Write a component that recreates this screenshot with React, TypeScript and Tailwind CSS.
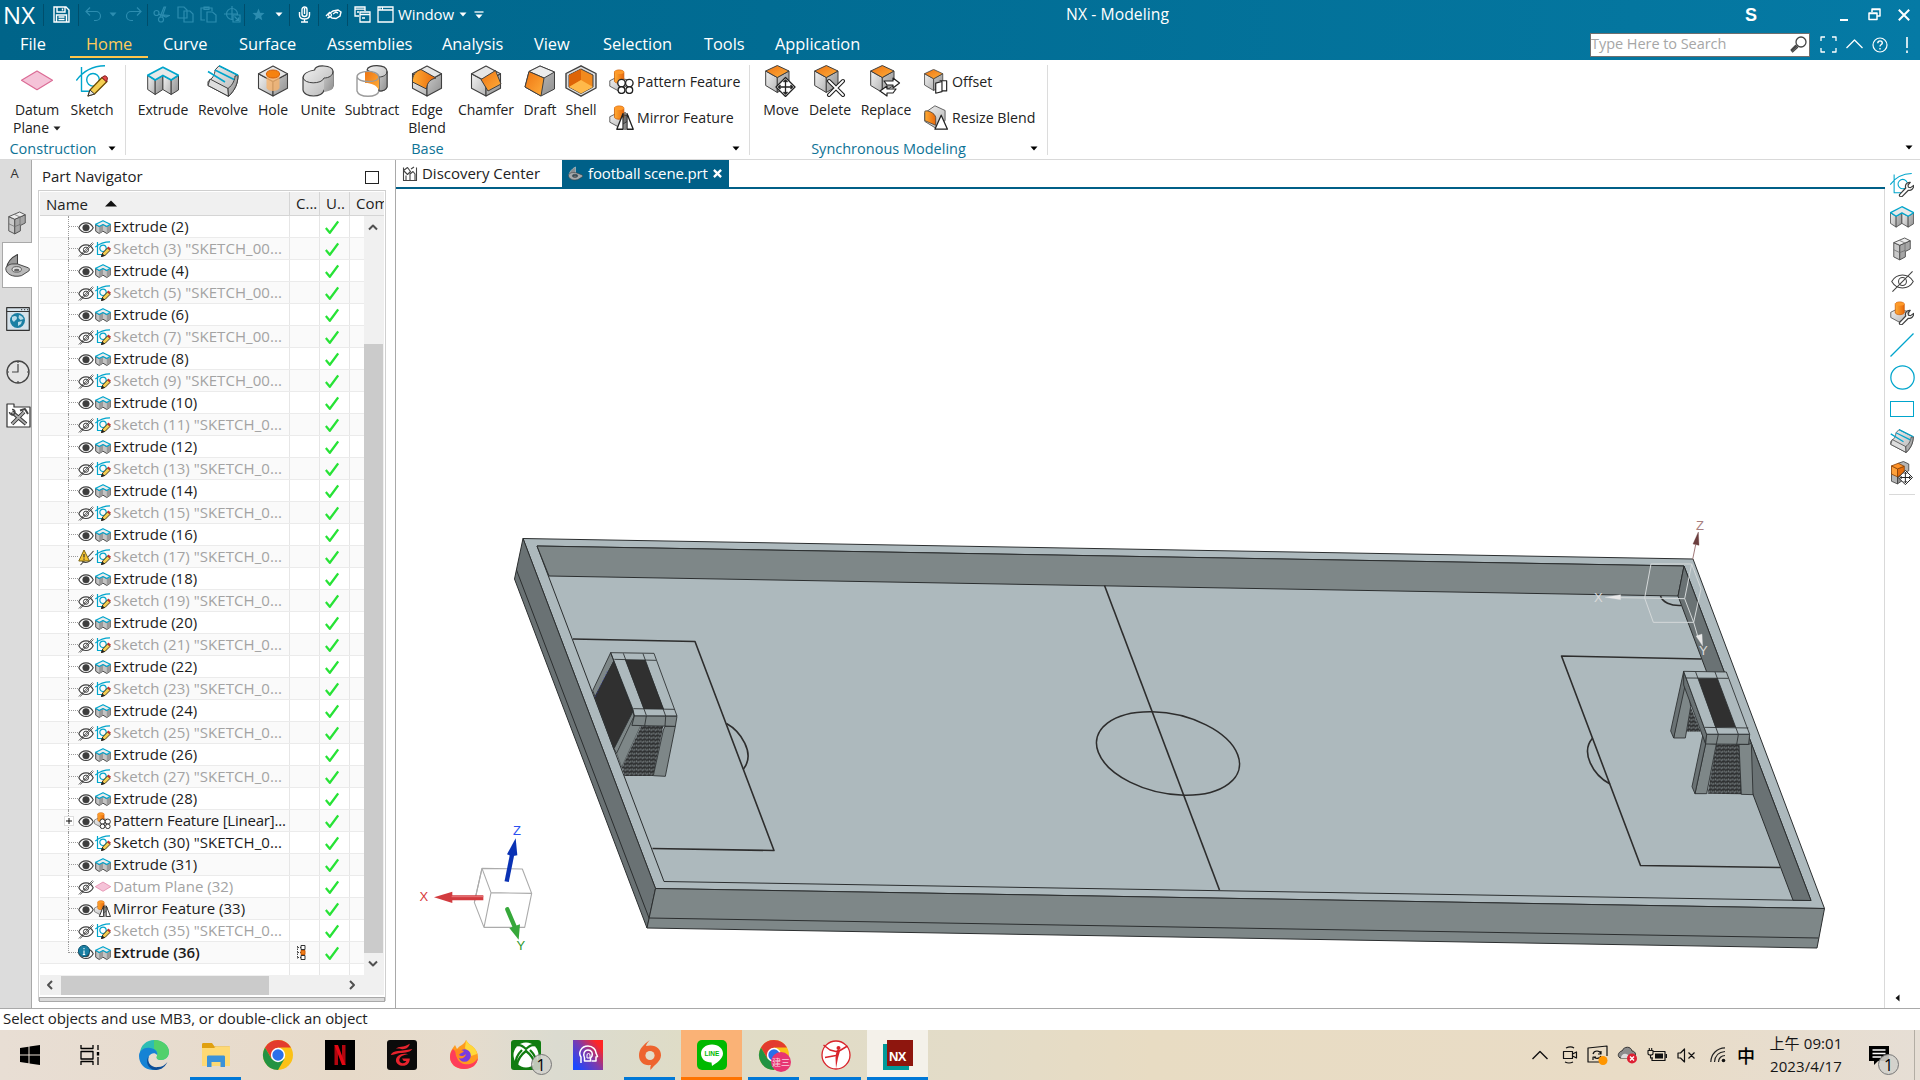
import React from "react";

const INK = "#3f3f3f";
const CY = "#00a5cc";

type P = { s?: number; className?: string };

function Ico({ s = 32, className = "", children, vb = "0 0 32 32" }: P & { children: React.ReactNode; vb?: string }) {
  return (
    <svg width={s} height={s} viewBox={vb} className={"shrink-0 " + className} fill="none" strokeLinejoin="round">
      {children}
    </svg>
  );
}

function Defs() {
  return (
    <svg width="0" height="0" className="absolute">
      <defs>
        <linearGradient id="gr" x1="0" y1="0" x2="1" y2="1">
          <stop offset="0" stopColor="#f2f2f2" />
          <stop offset="1" stopColor="#b4b4b4" />
        </linearGradient>
        <linearGradient id="gd" x1="0" y1="0" x2="1" y2="1">
          <stop offset="0" stopColor="#c9c9c9" />
          <stop offset="1" stopColor="#8f8f8f" />
        </linearGradient>
        <linearGradient id="or" x1="0" y1="0" x2="1" y2="1">
          <stop offset="0" stopColor="#ee7412" />
          <stop offset="1" stopColor="#ffae3b" />
        </linearGradient>
        <linearGradient id="ro" x1="0" y1="0" x2="1" y2="0">
          <stop offset="0" stopColor="#ffac35" />
          <stop offset="1" stopColor="#e8680a" />
        </linearGradient>
        <pattern id="net" width="13" height="12" patternUnits="userSpaceOnUse">
          <rect width="13" height="12" fill="#2f3132" />
          <path d="M2 2v6M7 1v6M11 4v6" stroke="#8d9698" strokeWidth="2.2" />
        </pattern>
      </defs>
    </svg>
  );
}

const Datum = (p: P) => (
  <Ico {...p}>
    <path d="M.5 15.3 16 6l15.5 9.3L16 24.7Z" fill="#f5c3d8" stroke="#db6b95" strokeWidth="1.2" />
  </Ico>
);

const SketchLines = () => (
  <g stroke={CY} strokeWidth="1.4">
    <path d="M.3 15.5C7 6 17 1 29 .7M5.5 2v24.3H21" />
    <circle cx="17" cy="14.8" r="6.3" />
  </g>
);

const Sketch = (p: P) => (
  <Ico {...p}>
    <SketchLines />
    <path d="m12 31 2-6L26 12.500l5 4-12.500 12.500Z" fill="#f5cf52" stroke="#6b4a00" strokeWidth="1.200" />
    <path d="m26 12.500 2-1.500c2-.8 4 1.500 3.300 3.200L30.500 17Z" fill="#e24848" stroke="#7c1b1b" />
    <path d="m12 31 2-6 4.500 4Z" fill="#e8e8e8" stroke="#333" />
  </Ico>
);

const SketchSm = (p: P) => (
  <Ico {...p} vb="0 0 16 16">
    <g stroke={CY} strokeWidth="1.200">
      <path d="M.3 6C4 3 8 .8 15 .8M2.500 1v12.500H8" />
      <circle cx="8" cy="7.300" r="3.200" />
    </g>
    <path d="m6.500 15.500 1.200-3.500 4.800-5 2.700 2.300-5 5Z" fill="#f5cf52" stroke="#33270a" strokeWidth=".9" />
    <path d="m12.800 6.300 2.600 2.200" stroke="#c03030" strokeWidth="1.800" />
    <path d="m6.500 15.500.9-2.500 1.800 1.600Z" fill="#222" stroke="#222" strokeWidth=".8" />
  </Ico>
);

const Wrench = () => (
  <path d="M13 28.500 21 20c-1.500-4 1.500-8 6-7.500l-3 3.500.5 3 3 .5 4-3c.5 4-3.500 7.500-7 6.500L16 31.500c-2 1-4.500-1-3-3Z" fill="#fff" stroke={INK} strokeWidth="1.600" />
);

const SketchWrench = (p: P) => (
  <Ico {...p}>
    <SketchLines />
    <Wrench />
  </Ico>
);

const Extrude = (p: P) => (
  <Ico {...p}>
    <path d="M.7 10.500v14l7.500 5V15Z" fill="url(#gr)" stroke={INK} />
    <path d="M8.200 15v14.500l7.700-5V10.500Z" fill="url(#gd)" stroke={INK} />
    <path d="M15.900 10.500v14l8.300 5V15Z" fill="url(#gr)" stroke={INK} />
    <path d="M24.200 15v14.500l7.300-4.500V10.500Z" fill="url(#gd)" stroke={INK} />
    <path d="M.7 10.200 15.900 2.300l15.600 8-7.300 4.700-8.300-4.500L8.200 15Z" fill="#e9e9e9" stroke={CY} strokeWidth="1.800" />
  </Ico>
);

const ExtrudeSm = () => (
  <Ico s={16} vb="0 0 16 16">
    <path d="M.7 5.500v6.700l3.500 2.300 3.800-2.300 3.800 2.300 3.500-2.300V5.500L11.800 7.500 8 5.500 4.200 7.500Z" fill="#c4c4c4" stroke="#4a4a4a" strokeWidth="1" />
    <path d="M4.200 7.500v7L8 12.200V5.500ZM11.800 7.500v7l3.500-2.300V5.500Z" fill="#9a9a9a" />
    <path d="M.7 5.200 8 1.700l7.300 3.500-3.500 2.300L8 5.500 4.200 7.500Z" fill="#ececec" stroke={CY} strokeWidth="1.200" />
  </Ico>
);

const Revolve = (p: P) => (
  <Ico {...p}>
    <path d="M8 5 12 .8l19 9.500c0 8-3 15-9.500 21L1 20.500v-4C5 14 8 10 8 5Z" fill="url(#gr)" stroke={INK} />
    <path d="M1 20.500 3 14l18 9.500.5 7.800Z" fill="#dedede" stroke={INK} />
    <path d="M21 23.500C26 20 28 14 28 11l3-.7c0 8-3 15-9.500 21Z" fill="url(#gd)" stroke={INK} />
    <path d="M1 6.500 18 17M12 .8 31 10.300M8 5l19 9.500" stroke={CY} strokeWidth="1.600" />
  </Ico>
);

const Cube = ({ t = "#e6e6e6", l = "url(#gr)", r = "url(#gd)" }: { t?: string; l?: string; r?: string }) => (
  <g stroke={INK} strokeWidth="1.100">
    <path d="M1.500 8.800v14.400L16 31V16.500Z" fill={l} />
    <path d="M30.500 8.800v14.400L16 31V16.500Z" fill={r} />
    <path d="M16 1 30.500 8.800 16 16.500 1.500 8.800Z" fill={t} />
  </g>
);

const Hole = (p: P) => (
  <Ico {...p}>
    <Cube />
    <path d="M9.500 10v13c1.500 4 11.500 4 13 0V10Z" fill="#f7b36b" opacity=".8" />
    <ellipse cx="16" cy="9" rx="6.700" ry="4" fill="#f5820f" stroke="#d4600a" />
  </Ico>
);

const Unite = (p: P) => (
  <Ico {...p}>
    <path d="M1 13v12c1 8 20 8 21 0 6 0 9-2 9-4V6C30 0 14-1 12.500 5 6 6 1 9 1 13Z" fill="url(#gr)" stroke={INK} strokeWidth="1.200" />
    <path d="M22 14v13c5-.5 9-2.500 9-5V6.500c-.5 3.500-4 5-9 7.500Z" fill="url(#gd)" />
    <path d="M1 12.500c1 7 19 7 21 .5 5 0 9-2.500 9-6.500" stroke={INK} />
  </Ico>
);

const Subtract = (p: P) => (
  <Ico {...p}>
    <path d="M11 5c1-6 19-6 20 1v16c-1 3-4 4-8 4V12Z" fill="url(#gr)" stroke={INK} strokeWidth="1.200" />
    <path d="M23 12c4 0 8-2 8-5.500V22c-1 3-4 4-8 4Z" fill="url(#gd)" stroke={INK} />
    <path d="M9 6c6 0 13 2 14 7v12c-3-5-7-7-14-7Z" fill="url(#or)" />
    <path d="M1 12v14c2 7 20 7 22 0M1 12c0-7 21-8 22 0-1 6-20 6-22 0Z" stroke="#9b9b9b" strokeWidth="1.400" />
  </Ico>
);

const EdgeBlend = (p: P) => (
  <Ico {...p}>
    <Cube />
    <path d="M1.500 17C1 10 5 6 10 4.500L25 13c-5 1-9 4-9.500 11Z" fill="url(#ro)" stroke={INK} />
  </Ico>
);
const Chamfer = (p: P) => (
  <Ico {...p}>
    <Cube />
    <path d="M25.500 5.500 31 19l-13 7-7-11.500Z" fill="url(#or)" stroke={INK} />
  </Ico>
);
const Draft = (p: P) => (
  <Ico {...p}>
    <path d="M16 1 30.500 7v17L17 31 1 22 5 6.500Z" fill="url(#gd)" stroke={INK} />
    <path d="M16 1 30.500 7 20 13 5 6.500Z" fill="#ececec" stroke={INK} />
    <path d="M5 6.500 20 13l-3 18L1 22Z" fill="url(#or)" stroke={INK} />
  </Ico>
);
const Shell = (p: P) => (
  <Ico {...p}>
    <path d="M16 .8 31 8.500V23l-15 8.200L1 23V8.500Z" fill="#ddd" stroke={INK} strokeWidth="1.400" />
    <path d="M16 4 28 10v12l-12 6.500L4 22V10Z" fill="#f28a1d" stroke={INK} />
    <path d="M16 4v11L4 22V10Z" fill="#de6407" />
    <path d="M4 22l12-7 12 7-12 6.500Z" fill="#ffb94a" />
  </Ico>
);

const PostBlock = () => (
  <g>
    <path d="M1 15 9 11l16 3v6l-13 8-11-6Z" fill="url(#gr)" stroke={INK} />
    <path d="M7 3.500c2-3 10-3 12 0V16c-2 3-10 3-12 0Z" fill="url(#ro)" stroke="#c85a05" />
    <ellipse cx="13" cy="4" rx="6" ry="2.300" fill="#ff9a2a" />
  </g>
);
const Pattern = (p: P) => (
  <Ico {...p}>
    <PostBlock />
    <g fill="#fff" stroke="#222" strokeWidth="1.700">
      <circle cx="16" cy="18" r="4.800" /><circle cx="26" cy="18" r="4.800" /><circle cx="16" cy="27" r="4.300" /><circle cx="26" cy="27" r="4.300" />
    </g>
  </Ico>
);
const Mirror = (p: P) => (
  <Ico {...p}>
    <PostBlock />
    <path d="M10 31 18 11v20ZM31 31 23 11v20Z" fill="#fff" stroke="#222" strokeWidth="1.700" />
    <path d="M20.500 9v23" stroke="#222" strokeWidth="1.400" />
  </Ico>
);

const SmallCube = () => (
  <g stroke={INK}>
    <path d="M.7 6v14.500l11.600 7V12.500Z" fill="url(#gr)" />
    <path d="M24 6v14.500l-11.700 7V12.500Z" fill="url(#gd)" />
    <path d="M12.300.5 24 6l-11.700 6.500L.7 6Z" fill="url(#or)" />
  </g>
);
const MoveArrows = () => (
  <g>
    <path d="M20.500 12.500 30 22l-9.500 9.500L11 22Z" fill="#fff" stroke="#222" strokeWidth="1.300" />
    <path d="M20.500 15v14M13.500 22h14M18.500 17l2-2 2 2M18.500 27l2 2 2-2M15.500 20l-2 2 2 2M25.500 20l2 2-2 2" stroke="#222" strokeWidth="1.300" />
  </g>
);
const Move = (p: P) => (<Ico {...p}><SmallCube /><MoveArrows /></Ico>);
const Delete = (p: P) => (
  <Ico {...p}><SmallCube /><path d="m15 16 14 14M29 16 15 30" stroke="#222" strokeWidth="4" strokeLinecap="round" /><path d="m15 16 14 14M29 16 15 30" stroke="#fff" strokeWidth="1.800" strokeLinecap="round" /></Ico>
);
const Replace = (p: P) => (
  <Ico {...p}><SmallCube /><path d="M14 16h9v-3l6.500 5-6.500 5v-3h-6Z" fill="#fff" stroke="#222" strokeWidth="1.200" /><path d="M26 24h-9v-3l-7 5 7 5v-3h6Z" fill="#fff" stroke="#222" strokeWidth="1.200" /></Ico>
);
const Offset = (p: P) => (
  <Ico {...p}><SmallCube /><path d="M20 15h9v13h-6" fill="#fff" stroke="#222" strokeWidth="1.500" /><path d="m15 18 8-2v13l-8 2Z" fill="#fff" stroke="#222" strokeWidth="1.500" /></Ico>
);
const Resize = (p: P) => (
  <Ico {...p}>
    <path d="M1 10 14 1l13 6v13l-13 9L1 21Z" fill="url(#gr)" stroke={INK} />
    <path d="M1 8c3-2 13 2 14 8v10L1 20Z" fill="url(#ro)" stroke={INK} />
    <path d="M14 31 22 13l8 18Z" fill="#fff" stroke="#222" strokeWidth="1.600" />
  </Ico>
);
const Blocks = (p: P) => (
  <Ico {...p}>
    <g stroke="#4c4c4c" strokeWidth="1.200">
      <path d="M5 7.500v19l8 4V11Z" fill="#c9c9c9" />
      <path d="M13 11 27 5v11l-6.500 3.300v7.200L13 30.500Z" fill="#a6a6a6" />
      <path d="M5 7.500 19.500 1.300 27 5 13 11Z" fill="#ececec" />
      <path d="m5 17 8 3.800 7.500-3M12.500 4.500 20 8v11" stroke="#6e6e6e" strokeWidth="1" />
    </g>
  </Ico>
);
const MoveBlocks = (p: P) => (
  <Ico {...p}>
    <g stroke={INK} strokeWidth="1.100">
      <path d="M11 3 18 .7 25 4v9l-7 3ZM2 16v11l8 3.500V19Z" fill="#b5b5b5" />
      <path d="M10 19.500 18 16v9l-8 5.500Z" fill="#8e8e8e" />
      <path d="M2 6.500v11l8 3.500V10.500Z" fill="#ffa13a" stroke="#8a4206" />
      <path d="M10 10.500 19 7v10.500L10 21Z" fill="#e86e0c" stroke="#8a4206" />
      <path d="M2 6.500 11 3l8 4-9 3.500Z" fill="#ff9226" stroke="#8a4206" />
    </g>
    <MoveArrows />
  </Ico>
);
const PostWrench = (p: P) => (<Ico {...p}><PostBlock /><Wrench /></Ico>);
const HiddenEye = (p: P) => (
  <Ico {...p}>
    <path d="M1 16c7-12 23-12 30 0-7 12-23 12-30 0Z" stroke={INK} strokeWidth="1.400" />
    <circle cx="16" cy="16" r="5.500" stroke={INK} strokeWidth="1.400" />
    <path d="M2 30 30 2" stroke={INK} strokeWidth="1.400" />
  </Ico>
);

const Part = (p: P & { dark?: boolean }) => (
  <Ico s={p.s} className={p.className}>
    <path d="M2 19C3 13 8 6 16 2v13l-6 6Z" fill={p.dark ? "#8a8f92" : "#9b9b9b"} stroke={p.dark ? "#c6cbce" : INK} strokeWidth="1.300" />
    <path d="M1 20c0-3 5-6 9-6h6l14 5c1.500 1 1.500 3 .5 4L21 29C9 32 1 26 1 20Z" fill={p.dark ? "#a5aaad" : "#b9b9b9"} stroke={INK} strokeWidth="1.200" />
    <ellipse cx="15" cy="21" rx="6" ry="3.500" fill={p.dark ? "#2a4a5a" : "#e2e2e2"} stroke={INK} />
    <ellipse cx="15" cy="22" rx="3.500" ry="1.800" fill="#666" />
  </Ico>
);

const Eye = ({ off = false, info = false }: { off?: boolean; info?: boolean }) => (
  <svg width="16" height="18" viewBox="0 0 16 18" fill="none" className="shrink-0">
    <path d="M.8 9.700C4 3.300 12 3.300 15.200 9.700 12 16 4 16 .8 9.700Z" stroke={INK} strokeWidth="1.100" fill="#fff" />
    <circle cx="8" cy="9.700" r={off ? 2.600 : 3.300} fill={off ? "none" : "#3d3d3d"} stroke={INK} strokeWidth={off ? 1 : .6} />
    {off && <path d="M.8 16.500 14.500 2.500M2.300 16.500 15.500 3.500" stroke={INK} strokeWidth=".8" />}
    {info && (
      <g>
        <circle cx="6" cy="7" r="5.600" fill="#1a7fa3" stroke="#0c5572" />
        <path d="M6 4v1.200M6 6.500v4M4.800 10.500h2.400" stroke="#fff" strokeWidth="1.100" />
      </g>
    )}
  </svg>
);

const WarnEye = () => (
  <svg width="16" height="18" viewBox="0 0 16 18" fill="none" className="shrink-0">
    <path d="M4 13C8 16 12 14 15.200 9.500M2.500 17 15.500 3" stroke={INK} strokeWidth="1.100" />
    <path d="M6 2 11.500 13H.8Z" fill="#f5c430" stroke="#7c6614" />
    <path d="M6 6v3.500M6 10.500v1.200" stroke="#333" strokeWidth="1.200" />
  </svg>
);

const Caret = ({ className = "" }: { className?: string }) => (
  <svg width="8" height="5" viewBox="0 0 8 5" className={"shrink-0 " + className}>
    <path d="M.5.5h7L4 4.500Z" fill="currentColor" />
  </svg>
);

/* ---------- title bar ---------- */

const Cell = ({ w, children, dim = false }: { w: string; children?: React.ReactNode; dim?: boolean }) => (
  <div className={"flex h-6 shrink-0 items-center justify-center " + w + (dim ? " text-[#2c8db0]" : " text-white")}>{children}</div>
);
const Sep = () => <div className="h-[22px] w-px shrink-0 bg-[#004e6c]" />;
const G = ({ children, w = 17 }: { children: React.ReactNode; w?: number }) => (
  <svg width={w} height="17" viewBox="0 0 17 17" fill="none" stroke="currentColor" strokeWidth="1.200">{children}</svg>
);

function QuickBar() {
  return (
    <div className="flex h-[29px] items-center whitespace-nowrap">
      <div className="w-[43px] shrink-0 pl-[3px] text-[24px] leading-[29px] tracking-[0.300px] text-white">NX</div>
      <Sep />
      <Cell w="w-[34px]"><G><path d="M1 1h12l3 3v12H1ZM4 1v5h8V1M9.500 2.500v2M3.500 16V9h10v7M5.500 11h6M5.500 13.500h6" strokeWidth="1.400" /></G></Cell>
      <Sep />
      <Cell w="w-[28px]" dim><G><path d="M1 5.500h10a4.300 4.300 0 0 1 0 9H9M5 1.500l-4 4 4 4" /></G></Cell>
      <Cell w="w-[12px]" dim><Caret /></Cell>
      <Cell w="w-[28px]" dim><G><path d="M16 5.500H6a4.300 4.300 0 0 0 0 9h2M12 1.500l4 4-4 4" /></G></Cell>
      <Sep />
      <Cell w="w-[26px]" dim><G><circle cx="3.500" cy="7" r="2.500" /><circle cx="8" cy="13.500" r="2.500" /><path d="M5.500 8.500 16 9.500 13 11 5.500 8M9 11 12.500 1 11 1 7 11" /></G></Cell>
      <Cell w="w-[22px]" dim><G><path d="M1 1h6l3 3v8H1ZM7 5h6l3 3v8H7Z" /></G></Cell>
      <Cell w="w-[24px]" dim><G><path d="M5 14H1V2h11v3M4 1h5v2.500H4ZM7 6h5.500L16 9v7H7Z" /></G></Cell>
      <Cell w="w-[24px]" dim><G><circle cx="8" cy="8" r="5.500" /><path d="M8 0v8H0M8 8v6M8 8h6" /><path d="M9 9h7v7H9ZM10.500 10.500l4 4M14.500 11.500v3h-3" fill="#00668b" /></G></Cell>
      <Sep />
      <Cell w="w-[26px]" dim><svg width="13" height="13" viewBox="0 0 13 13" fill="currentColor"><path d="m6.500.5 1.700 4.200 4.300.3-3.300 2.900 1.100 4.400-3.800-2.400-3.800 2.400 1.100-4.400L.5 5l4.300-.3Z" /></svg></Cell>
      <Cell w="w-[15px]"><Caret /></Cell>
      <div className="w-[3px]" />
      <Sep />
      <Cell w="w-[28px]"><G><path d="M6 3.500a2.500 2.500 0 0 1 5 0V8a2.500 2.500 0 0 1-5 0ZM3.500 6v3c0 2.500 2 4 5 4s5-1.500 5-4V6M8.500 13v3M5 16h7M8.500 2v6" strokeWidth="1.400" /></G></Cell>
      <Sep />
      <Cell w="w-[28px]"><G><path d="M4.500 7.500 8 5l5-1 3 2-1 4-4 2.500-4-.5-2.500-2M8 8l3-2 2 1M1 10l4-4M2.500 12l3-1.500" strokeWidth="1.400" /><circle cx="5" cy="9" r="1.500" /></G></Cell>
      <Sep />
      <Cell w="w-[28px]"><G><path d="M5 10H1V1h10v4M1 3.200h10M6 6h10v10H6ZM6 8.500h10M8 12h3M3 6h2" strokeWidth="1.300" /></G></Cell>
      <Cell w="w-[19px]"><G><path d="M1 1h15v15H1ZM1 4h15M2.500 2.500h1M5 2.500h1" strokeWidth="1.300" /></G></Cell>
      <div className="ml-[3px] w-[61px] shrink-0 text-[15px] tracking-[-0.100px] text-white">Window</div>
      <Cell w="w-[8px]"><Caret /></Cell>
      <Cell w="w-[24px]"><svg width="10" height="8" viewBox="0 0 10 8"><path d="M.5 1h9" stroke="#fff" strokeWidth="1.300" /><path d="M1.500 3.500h7L5 7.500Z" fill="#fff" /></svg></Cell>
      <div className="ml-[575px] w-[130px] shrink-0 text-[15.700px] tracking-[0.080px] text-white">NX - Modeling</div>
      <div className="ml-[549px] w-[95px] shrink-0 font-['Liberation_Sans'] text-[18px] font-bold leading-[24px] text-white">S</div>
      <div className="mt-[11px] h-[2px] w-2 bg-white" />
      <Ico s={13} vb="0 0 13 13" className="ml-[20px]"><path d="M4 4V1h8v7H9M1 5h8v6.500H1ZM1 5.500h8M4 1.500h8" stroke="#fff" strokeWidth="1.500" /></Ico>
      <Ico s={12} vb="0 0 12 12" className="ml-[17px]"><path d="m.8.8 10.400 10.400M11.200.8.800 11.200" stroke="#fff" strokeWidth="2" /></Ico>
    </div>
  );
}

function MenuBar() {
  const tabs: [string, string][] = [
    ["File", "w-[66px]"], ["Home", "w-[77px]"], ["Curve", "w-[76px]"], ["Surface", "w-[88px]"], ["Assemblies", "w-[115px]"],
    ["Analysis", "w-[92px]"], ["View", "w-[69px]"], ["Selection", "w-[101px]"], ["Tools", "w-[71px]"], ["Application", "w-[120px]"],
  ];
  return (
    <div className="flex h-[31px] items-center pl-[20px]">
      {tabs.map(([t, w]) => (
        <div key={t} className={"relative h-[31px] shrink-0 text-[16.400px] leading-[29px] tracking-[-0.030px] " + w + (t === "Home" ? " text-[#ffcb5b]" : " text-white")}>
          {t}
          {t === "Home" && <div className="absolute bottom-[2px] left-[-16px] h-[2px] w-[78px] bg-[#ffc64b]" />}
        </div>
      ))}
      <div className="ml-auto flex items-center pr-[9px]">
        <div className="flex h-[24px] w-[220px] items-center justify-between border border-[#6f6f6f] bg-white pr-[2px] text-[14.500px] leading-[20px] tracking-[-0.050px] text-[#a6a6a6]">
          <span className="pb-px">Type Here to Search</span>
          <Ico s={17} vb="0 0 17 17"><circle cx="11" cy="6" r="5" stroke="#444" strokeWidth="1.300" /><path d="m7.500 9.500-6 5.500M6 9 1 14l1.500 2L8 11" stroke="#444" strokeWidth="1.200" /></Ico>
        </div>
        <Ico s={17} vb="0 0 17 17" className="ml-[10px]"><path d="M1 5V1h4M12 1h4v4M16 12v4h-4M5 16H1v-4" stroke="#fff" strokeWidth="1.300" /></Ico>
        <Ico s={17} vb="0 0 17 17" className="ml-[9px]"><path d="m.5 12 8-8 8 8" stroke="#fff" strokeWidth="1.300" /></Ico>
        <Ico s={16} vb="0 0 16 16" className="ml-[9px]"><circle cx="8" cy="8" r="7" stroke="#fff" strokeWidth="1.200" /><path d="M5.800 6.200c0-3 4.500-3 4.500-.3C10.300 7.600 8 7.500 8 9.500M8 11v1.500" stroke="#fff" strokeWidth="1.400" /></Ico>
        <Ico s={8} vb="0 0 4 16" className="ml-[15px] h-4"><path d="M2 0v11M2 13.500V16" stroke="#fff" strokeWidth="1.600" /></Ico>
      </div>
    </div>
  );
}

/* ---------- ribbon ---------- */

const Btn = ({ w, icon, label, sub, caret = false }: { w: string; icon: React.ReactNode; label: string; sub?: string; caret?: boolean }) => (
  <div className={"flex shrink-0 flex-col items-center pt-[5px] text-[14px] leading-[18px] tracking-[-0.050px] whitespace-nowrap " + w}>
    {icon}
    <div className="mt-[4px]">{label}</div>
    {sub && <div className="flex items-center gap-[4px]">{sub}{caret && <Caret />}</div>}
  </div>
);
const Row = ({ icon, label }: { icon: React.ReactNode; label: string }) => (
  <div className="flex h-[36px] items-center gap-[3px] whitespace-nowrap text-[14.200px] leading-[20px]">{icon}<span className="pt-px">{label}</span></div>
);
const GroupLabel = ({ children, pr }: { children?: React.ReactNode; pr: string }) => (
  <div className={"relative mt-auto flex h-[20px] items-start justify-center text-[14.500px] leading-[19px] text-[#0e7396] " + pr}>
    {children}
    <Caret className="absolute right-[9px] top-[7px] text-black" />
  </div>
);

function Ribbon() {
  return (
    <div className="flex h-[100px] border-b border-[#d9d9d9] bg-white text-[#222]">
      <div className="flex w-[125px] flex-col">
        <div className="flex pl-[8px]">
          <Btn w="w-[58px]" icon={<Datum />} label="Datum" sub="Plane" caret />
          <Btn w="w-[52px]" icon={<Sketch />} label="Sketch" />
        </div>
        <GroupLabel pr="pr-[19px]">Construction</GroupLabel>
      </div>
      <div className="mt-[5px] h-[90px] w-px bg-[#dcdcdc]" />
      <div className="flex w-[623px] flex-col">
        <div className="flex pl-[7px]">
          <Btn w="w-[60px]" icon={<Extrude />} label="Extrude" />
          <Btn w="w-[60px]" icon={<Revolve />} label="Revolve" />
          <Btn w="w-[40px]" icon={<Hole />} label="Hole" />
          <Btn w="w-[50px]" icon={<Unite />} label="Unite" />
          <Btn w="w-[58px]" icon={<Subtract />} label="Subtract" />
          <Btn w="w-[52px]" icon={<EdgeBlend />} label="Edge" sub="Blend" />
          <Btn w="w-[66px]" icon={<Chamfer />} label="Chamfer" />
          <Btn w="w-[42px]" icon={<Draft />} label="Draft" />
          <Btn w="w-[40px]" icon={<Shell />} label="Shell" />
          <div className="pl-[8px] pt-[3px]">
            <Row icon={<Pattern s={25} />} label="Pattern Feature" />
            <Row icon={<Mirror s={25} />} label="Mirror Feature" />
          </div>
        </div>
        <GroupLabel pr="pr-[20px]">Base</GroupLabel>
      </div>
      <div className="mt-[5px] h-[90px] w-px bg-[#dcdcdc]" />
      <div className="flex w-[297px] flex-col">
        <div className="flex pl-[7px]">
          <Btn w="w-[48px]" icon={<Move />} label="Move" />
          <Btn w="w-[50px]" icon={<Delete />} label="Delete" />
          <Btn w="w-[62px]" icon={<Replace />} label="Replace" />
          <div className="pl-[7px] pt-[3px]">
            <Row icon={<Offset s={25} />} label="Offset" />
            <Row icon={<Resize s={25} />} label="Resize Blend" />
          </div>
        </div>
        <GroupLabel pr="pr-[20px]">Synchronous Modeling</GroupLabel>
      </div>
      <div className="mt-[5px] h-[90px] w-px bg-[#dcdcdc]" />
      <div className="flex flex-1 items-end justify-end pb-[9px] pr-[7px]"><Caret className="text-black" /></div>
    </div>
  );
}

/* ---------- navigator ---------- */

type Item = { n: string; k: "e" | "s" | "p" | "d" | "m"; off?: boolean; warn?: boolean; info?: boolean; plus?: boolean };

const items: Item[] = [];
for (let i = 2; i <= 28; i++) {
  if (i % 2 === 0) items.push({ n: `Extrude (${i})`, k: "e" });
  else items.push({ n: `Sketch (${i}) "SKETCH_${i < 10 ? "00" : "0"}...`, k: "s", off: true, warn: i === 17 });
}
items.push(
  { n: "Pattern Feature [Linear]...", k: "p", plus: true },
  { n: 'Sketch (30) "SKETCH_0...', k: "s" },
  { n: "Extrude (31)", k: "e" },
  { n: "Datum Plane (32)", k: "d", off: true },
  { n: "Mirror Feature (33)", k: "m" },
  { n: 'Sketch (35) "SKETCH_0...', k: "s", off: true },
  { n: "Extrude (36)", k: "e", info: true },
);

const kindIcon = { e: <ExtrudeSm />, s: <SketchSm s={16} />, p: <Pattern s={17} />, d: <Datum s={16} />, m: <Mirror s={17} /> };
const tracking = { e: "tracking-[-0.020px]", s: "tracking-[0.060px]", p: "tracking-[-0.220px]", d: "tracking-normal", m: "tracking-normal" };

function TreeRow({ it, i }: { it: Item; i: number }) {
  const last = !!it.info;
  return (
    <div className={"flex h-[22px] border-b border-[#ebebeb] " + (i % 2 ? "bg-[#fafafa]" : "bg-white")}>
      <div className="flex w-[250px] shrink-0 items-center border-r border-[#e6e6e6]">
        <div className={"ml-[28px] w-0 border-l border-dotted border-[#9a9a9a] " + (last ? "mb-auto h-[11px]" : "h-[22px]")} />
        {it.plus ? (
          <div className="relative z-10 -ml-[5px] mr-[4px] flex h-[10px] w-[10px] items-center justify-center border border-[#dedede] bg-white">
            <Ico s={6} vb="0 0 6 6"><path d="M3 0v6M0 3h6" stroke="#111" /></Ico>
          </div>
        ) : (
          <div className="w-[9px] border-t border-dotted border-[#9a9a9a]" />
        )}
        {it.warn ? <WarnEye /> : <Eye off={it.off} info={it.info} />}
        <div className="flex w-[17px] shrink-0 justify-center">{kindIcon[it.k]}</div>
        <div className={"ml-[2px] whitespace-nowrap text-[15px] leading-[21px] " + (it.off ? "text-[#a3a3a3] " : "text-[#1c1c1c] ") + (last ? "font-semibold tracking-[-0.030px]" : tracking[it.k])}>{it.n}</div>
      </div>
      <div className="flex w-[30px] shrink-0 items-center justify-center border-r border-[#e6e6e6] pr-[8px]">
        {last && (
          <Ico s={15} vb="0 0 15 15"><path d="M4.500 1v13M4.500 2.500h4M4.500 7.500h4M4.500 12.500h4" stroke="#444" strokeDasharray="1.500 1" /><path d="M8 .5h4v4H8ZM8 10.500h4v4H8Z" fill="#fff" stroke="#333" /><path d="M8 5.500h4v4H8Z" fill="#f07d1a" stroke="#c85a05" /></Ico>
        )}
      </div>
      <div className="flex w-[30px] shrink-0 items-center justify-center border-r border-[#e6e6e6] pr-[6px]">
        <Ico s={14} vb="0 0 14 14"><path d="m.8 8 4 4.800L13.200 1.500" stroke="#27e336" strokeWidth="2.300" /></Ico>
      </div>
    </div>
  );
}

const Chev = ({ d }: { d: string }) => (
  <Ico s={10} vb="0 0 10 10"><path d={d} stroke="#505050" strokeWidth="2" /></Ico>
);

function Navigator() {
  return (
    <div className="flex w-[364px] shrink-0 flex-col border-r border-[#a9a9a9] bg-white pl-[6px]">
      <div className="flex h-[30px] items-center justify-between pl-[4px] pr-[16px] pt-[2px] text-[15px] text-[#222]">
        <span>Part Navigator</span>
        <div className="mt-[2px] h-[13px] w-[14px] border-[1.500px] border-[#222]" />
      </div>
      <div className="h-[811px] w-[348px] border border-[#cfcfcf] p-px">
        <div className="flex h-[24px] w-[344px] overflow-hidden border-b border-[#d5d5d5] bg-[#f0f0f0] text-[15px] leading-[22px] text-[#222]">
          <div className="flex w-[250px] shrink-0 items-center border-r border-[#d5d5d5] pl-[6px]">
            Name<svg width="12" height="7" viewBox="0 0 12 7" className="ml-[17px]"><path d="M0 6.500h12L6 .5Z" fill="#111" /></svg>
          </div>
          <div className="w-[30px] shrink-0 overflow-hidden border-r border-[#d5d5d5] pl-[6px]">C...</div>
          <div className="w-[30px] shrink-0 overflow-hidden border-r border-[#d5d5d5] pl-[6px]">U..</div>
          <div className="shrink-0 pl-[6px]">Com</div>
        </div>
        <div className="flex h-[759px]">
          <div className="w-[324px] overflow-hidden">
            {items.map((it, i) => <TreeRow key={i} it={it} i={i} />)}
            <div className="flex h-[11px]">
              <div className="w-[250px] border-r border-[#e6e6e6]" />
              <div className="w-[30px] border-r border-[#e6e6e6]" />
              <div className="w-[30px] border-r border-[#e6e6e6]" />
            </div>
          </div>
          <div className="flex w-[20px] flex-col items-start bg-[#f0f0f0]">
            <div className="flex h-[128px] pl-[4px] pt-[6px]"><Chev d="m1 7.500 4-4 4 4" /></div>
            <div className="h-[609px] w-[19px] bg-[#cbcbcb]" />
            <div className="flex flex-1 items-center pl-[4px]"><Chev d="m1 2.500 4 4 4-4" /></div>
          </div>
        </div>
        <div className="flex h-[20px] items-center bg-[#f0f0f0]">
          <div className="flex w-[21px] justify-center"><Chev d="m6 1-4 4 4 4" /></div>
          <div className="h-[19px] w-[208px] bg-[#cbcbcb]" />
          <div className="ml-[78px] flex"><Chev d="m3 1 4 4-4 4" /></div>
        </div>
        <div className="-mx-[1px] mt-[2px] h-[5px] border border-[#a9a9a9] bg-[#dadada]" />
      </div>
    </div>
  );
}

function SideTabs() {
  return (
    <div className="flex w-[32px] shrink-0 flex-col items-center border-r border-[#a9a9a9] bg-[#dcdcdc]">
      <div className="mr-[2px] mt-[4px] text-[13px] leading-[18px] text-[#333]">A</div>
      <div className="mt-[29px] h-[24px]"><Blocks s={24} className="ml-[3px]" /></div>
      <div className="-mr-px ml-[2px] mt-[7px] flex h-[46px] w-[30px] items-center justify-center border border-r-0 border-[#a9a9a9] bg-white"><Part s={25} /></div>
      <div className="mt-[19px] h-[25px] w-[25px] ml-[5px]">
        <Ico s={24} vb="0 0 24 24"><path d="M.7.7h22.600v22.600H.7Z" fill="#d6e2ea" stroke="#333" strokeWidth="1.200" /><path d="M.7 4.500h22.600M15 2.700h1.200M18 2.700h1.200M21 2.700h1" stroke="#333" /><circle cx="11.500" cy="13.500" r="7.500" fill="#1a7fa3" /><path d="M6 10c3-2 5-1 5 1s-2 2-3 4l-2-2ZM13 8c3 1 4 2 4.500 4l-3 1-2-2ZM12 15l4-1-1 3-3 2Z" fill="#b8dcea" /></Ico>
      </div>
      <div className="ml-[4px] mt-[28px] h-[25px]">
        <Ico s={24} vb="0 0 24 24"><circle cx="12" cy="12" r="11" stroke="#444" strokeWidth="1.300" fill="#e4e4e4" /><path d="M12 4v8H6M12 1v2M12 21v2M1 12h2M21 12h2" stroke="#444" strokeWidth="1.200" /></Ico>
      </div>
      <div className="ml-[5px] mt-[18px]">
        <Ico s={25} vb="0 0 25 25"><path d="M1 4V1h7v3h16v20H1Z" fill="#fff" stroke="#333" strokeWidth="1.200" /><path d="m6 9 14 12M18 9 6 21" stroke="#333" strokeWidth="3.800" /><path d="m6 9 14 12M18 9 6 21" stroke="#aaa" strokeWidth="1.800" /><path d="m14 7.500 5-1.500 3 5" stroke="#444" strokeWidth="2" /><path d="M3.500 9c0 3 4 4 5 1.500s0-4-2.500-4" stroke="#444" strokeWidth="1.500" /></Ico>
      </div>
    </div>
  );
}

/* ---------- model view ---------- */

const E = "#2b2e2f";
const LIGHT = "#adb9bd";
const MID = "#7e8788";
const DARK = "#6a7274";

function Scene() {
  return (
    <svg width="1488" height="819" viewBox="396 189 1488 819" fill="none" strokeLinejoin="round" className="block">
      <g stroke={E} strokeWidth="1">
        <path d="M523 538.500 1693 559l131.500 349.500L655.500 888.500Z" fill={LIGHT} />
        <path d="M523 538.500 655.500 888.500 647 928 514.500 579Z" fill={DARK} />
        <path d="M516.500 570 649 918" />
        <path d="M655.500 888.500 1824.500 908.500 1817 948 647 928Z" fill={MID} />
        <path d="m649 918 1169.500 20" />
        <path d="M537 546 1684 566l127 334.500L664 881.500Z" fill={LIGHT} />
        <path d="M537 546 1684 566 1678 596 549 576Z" fill={MID} />
        <path d="M1684 566 1811 900.500l-18-.3L1678 596Z" fill={DARK} />
      </g>
      <g stroke="#2d2d2d" strokeWidth="1.600">
        <path d="M573 639 695 641.500 774 850.500 652.500 848.500" />
        <path d="M726.500 723.500C740 731 756 753 743.500 769" />
        <path d="m1104.500 585.500 115 304.500" />
        <path d="M1701.500 659 1561.500 656l79 209.500 139.500 2" />
        <path d="M1592.700 738C1580 752 1593 775 1610 784" />
        <path d="M1660.500 596c2 6 10 10 20.500 9.500" />
        <circle r="1" transform="matrix(69.700 1.200 16 41.700 1168 753.500)" vectorEffect="non-scaling-stroke" />
      </g>
      <g transform="translate(500 520) scale(.33333)" stroke={E} strokeWidth="2.600">
        <path d="M332 398 343 420 286 532 278 512Z" fill={MID} />
        <path d="M343 420 401 570 342 688 284 532Z" fill="#303030" />
        <path d="M286 530 323 452" stroke="#3038b0" strokeWidth="2" strokeDasharray="4 6" />
        <path d="M401 570 403 588 350 700 342 686Z" fill={MID} />
        <path d="M403 588 396 616 422 617 365 742 350 700Z" fill={MID} strokeWidth="1.500" />
        <path d="M424 618H490L460 768H373L366 742Z" fill="url(#net)" stroke="none" />
        <path d="M495 619H526L496 769 460 767 490 630Z" fill={MID} />
        <path d="M332 398 462 400 531 588 403 588 399 568Z" fill={LIGHT} />
        <path d="M375 420H436L492 567H431Z" fill="#303030" stroke="none" />
        <path d="M343 418 468 421M400 566 524 568M370 400 439 586M429 401 497 588M332 398 403 588" />
        <path d="M403 588 531 589 526 619 396 616Z" fill={MID} />
        <path d="M439 588 434 617M497 589 495 619" />
      </g>
      <g transform="translate(1540 510) scale(.33333)" stroke={E} strokeWidth="2.600">
        <path d="M452 590 492 690 484 665H440Z" fill="url(#net)" stroke="none" />
        <path d="M440 505 431 520 401 684H436L452 590Z" fill={MID} />
        <path d="M431 484 440 505 401 684 392 663Z" fill={DARK} />
        <path d="M529 703H597L605 853 503 851Z" fill="url(#net)" stroke="none" />
        <path d="M597 703H626L634 700 639 854 604 853Z" fill={MID} />
        <path d="M497 700 529 702 500 851H465Z" fill={MID} />
        <path d="M490 668 497 702 465 851 456 830Z" fill={DARK} />
        <path d="M431 484 500 673 497 702 431 525Z" fill={DARK} />
        <path d="M431 484 559 486 629 673H500Z" fill={LIGHT} />
        <path d="M474 505H532L587 652H526Z" fill="#303030" stroke="none" />
        <path d="M438 504 565 505M494 652 625 654M467 486 535 673M525 486 595 673" />
        <path d="M500 673H629L626 703 497 702Z" fill={MID} />
        <path d="M535 673 529 702M595 674 590 703" />
      </g>
      <g transform="translate(1540 510) scale(.33333)" stroke="#d5d9da" strokeWidth="3">
        <path d="M333 162 455 162 483 236 461 337H340L314 264ZM434 266 455 162M434 266 461 337M434 266 240 263" />
        <path d="M461 337 473 378" />
        <path d="M195 262 242 254V269Z" fill="#e9e9e9" strokeWidth="1" />
        <path d="M488 408 468 378 486 372Z" fill="#e9e9e9" strokeWidth="1" />
        <path d="M458 148 467 104" stroke="#a07878" />
        <path d="M475 66 459 102 477 106Z" fill="#6b3d3d" stroke="#6b3d3d" strokeWidth="1" />
      </g>
      <g fontFamily="Liberation Sans, sans-serif" fontSize="13">
        <text x="1696" y="529.500" fill="#a87f7f">Z</text>
        <text x="1594" y="601.500" fill="#dadada">X</text>
        <text x="1699" y="655" fill="#dadada">Y</text>
        <text x="513" y="835" fill="#2a50f0">Z</text>
        <text x="419.500" y="901" fill="#d83a3a">X</text>
        <text x="516.500" y="950" fill="#2f9a2f">Y</text>
      </g>
      <g transform="translate(400 810) scale(.33333)" stroke="#ababab" strokeWidth="3.300">
        <path d="M246 175 367 177 395 250 374 352H252L223 277ZM246 175 273 248 395 250M273 248 252 352" />
        <path d="M246 175 223 277" />
        <path d="M320 215 336 135" stroke="#0a32b4" strokeWidth="13" />
        <path d="M347 85 321 133 336 139 352 136Z" fill="#0a32b4" stroke="none" />
        <path d="M250 263H155" stroke="#d23b3f" strokeWidth="15" />
        <path d="M102 262 157 245V279Z" fill="#d23b3f" stroke="none" />
        <path d="M155 260H250" stroke="#e8777a" strokeWidth="3" />
        <path d="M322 298 344 350" stroke="#36a83a" strokeWidth="13" strokeLinecap="round" />
        <path d="M356 389 328 354 360 343Z" fill="#36a83a" stroke="none" />
      </g>
    </svg>
  );
}

function RightBar() {
  const c = "flex h-[32px] items-center justify-center";
  return (
    <div className="flex w-[36px] shrink-0 flex-col bg-white pr-[2px] pt-[9px]">
      <div className={c}><SketchWrench s={24} /></div>
      <div className={c}><Extrude s={24} /></div>
      <div className={c}><Blocks s={24} /></div>
      <div className={c}><HiddenEye s={23} /></div>
      <div className={c}><PostWrench s={24} /></div>
      <div className={c}><Ico s={24} vb="0 0 24 24"><path d="M.5 23.500 23.500.5" stroke={CY} strokeWidth="1.300" /></Ico></div>
      <div className={c}><Ico s={25} vb="0 0 24 24"><circle cx="12" cy="12" r="11.200" stroke={CY} strokeWidth="1.200" /></Ico></div>
      <div className={c}><div className="h-[16px] w-[24px] border border-[#00a5cc]" /></div>
      <div className={c}><Revolve s={24} /></div>
      <div className={c}><MoveBlocks s={24} /></div>
      <div className="mx-[4px] mt-[5px] h-px bg-[#d9d9d9]" />
      <svg width="5" height="8" viewBox="0 0 5 8" className="mb-[6px] ml-[10px] mt-auto"><path d="M4.500.5v7L.5 4Z" fill="#111" /></svg>
    </div>
  );
}

function Viewer() {
  return (
    <div className="flex flex-1 bg-white">
      <div className="flex w-[1489px] flex-col">
        <div className="flex h-[29px] border-b-2 border-[#005f87]">
          <div className="flex w-[166px] items-center pl-[6px] text-[15px] tracking-[-0.020px] text-[#222]">
            <Ico s={16} vb="0 0 16 16" className="mr-[4px]"><path d="M1.500 1.500v13h13V1.500M1.500 4.500l4-3 3 4-3 3ZM9 3l3-2M8 14V8l3-2.500L13 8v6M4 9.500v5" stroke="#444" strokeWidth="1.100" /></Ico>
            Discovery Center
          </div>
          <div className="flex w-[167px] items-center bg-[#006088] pl-[6px] text-[15px] tracking-[-0.150px] text-white">
            <Part s={15} dark className="mr-[5px]" />
            football scene.prt
            <Ico s={9} vb="0 0 8 8" className="ml-[5px]"><path d="m.8.8 6.400 6.400M7.200.8.800 7.200" stroke="#fff" strokeWidth="2" /></Ico>
          </div>
        </div>
        <div className="flex h-[819px] border-r border-[#d9d9d9]"><Scene /></div>
      </div>
      <RightBar />
    </div>
  );
}

/* ---------- taskbar ---------- */

const Chrome = ({ tag = false }: { tag?: boolean }) => (
  <svg width="34" height="34" viewBox="0 0 34 34" className={"shrink-0 " + (tag ? "ml-[3px]" : "ml-[3px]")}>
    <circle cx="16" cy="17" r="15" fill="#fbc116" />
    <path d="M3 9.500A15 15 0 0 1 29 9.500H16L9.500 20.700Z" fill="#e33b2e" />
    <path d="M3 9.500A15 15 0 0 0 16 32l6.500-11.300H9.500Z" fill="#229342" />
    <circle cx="16" cy="17" r="7.200" fill="#fff" />
    <circle cx="16" cy="17" r="5.700" fill="#2a6fea" />
    {tag && (
      <g><circle cx="23" cy="24" r="10" fill="#e73572" /><text x="23" y="27.500" fontSize="9" textAnchor="middle" fill="#f9cfdd" fontFamily="Noto Sans CJK TC, sans-serif">建三</text></g>
    )}
  </svg>
);

function Task({ children, on, bg = "" }: { children: React.ReactNode; on?: string; bg?: string }) {
  return (
    <div className={"relative mr-px flex h-[50px] w-[61px] shrink-0 items-center justify-center " + bg}>
      {children}
      {on && <div className={"absolute bottom-0 h-[3px] " + on} />}
    </div>
  );
}

const Badge = ({ className }: { className: string }) => (
  <div className={"absolute flex h-[21px] w-[21px] items-center justify-center rounded-full border border-[#777] bg-[#d2d0cb]/90 text-[16px] leading-none text-black " + className}>1</div>
);

function Taskbar() {
  const blue = "w-[51px] bg-[#0078d7]";
  return (
    <div className="flex h-[50px] items-center bg-[linear-gradient(90deg,#e8ded4_0%,#e7dac9_18%,#e6dccd_24%,#dbdbd0_29%,#dfdcc6_36%,#e3dcc8_50%,#e8dcc3_60%,#e9dcc6_85%,#e6ded5_100%)]">
      <div className="flex w-[60px] justify-center">
        <Ico s={20} vb="0 0 20 20"><path d="M0 3 8.500 1.800V9.500H0ZM9.500 1.600 20 0v9.500H9.500ZM0 10.500h8.500v7.700L0 17ZM9.500 10.500H20V20L9.500 18.400Z" fill="#000" /></Ico>
      </div>
      <div className="flex w-[63px] justify-center pr-[3px]">
        <Ico s={20} vb="0 0 20 20"><path d="M1 0v3.500h12V0M1 20v-3.500h12V20M1 6.500h12v7.500H1ZM18 0v5M18 12v8" stroke="#000" strokeWidth="1.300" /><path d="M16.800 7h2.400v3.500h-2.400Z" fill="#000" /></Ico>
      </div>
      <Task>
        <Ico s={30} vb="0 0 30 30">
          <path d="M1 14C1 5 8 0 15 0c9 0 15 6 15 12 0 5-4 8-8 8s-5-2-4-4c1-3-2-7-7-7C6 9 2 11 1 14Z" fill="#2dbdb4" />
          <path d="M15 0c9 0 15 6 15 12 0 5-4 8-8 8-4-.2-5-2-4-4 1-3 0-6-3-7Z" fill="#52d06c" />
          <path d="M0 16c0-6 6-9 11-8 5 .5 8 4 7 7-2-3-6-2-8 1-3 6 2 12 8 13.500C8 32 0 25 0 16Z" fill="#1583d5" />
          <path d="M10 16c-3 7 3 12 9 11 4 0 7-2 9.500-5C25 29 20 30 16 30 8 29 6 20 10 16Z" fill="#0d4d96" />
        </Ico>
      </Task>
      <Task on={blue}>
        <Ico s={28} vb="0 0 28 28"><path d="M0 5V3.500C0 2.500.5 2 1.500 2H10l2.500 3.500H27c.7 0 1 .3 1 1V9H0Z" fill="#e0a010" /><path d="M0 7h12l2-1.500h14V25H0Z" fill="#fed974" /><path d="M5 26V16c0-1 .5-1.500 1.500-1.500h15c1 0 1.500.5 1.500 1.500v10h-4.500v-5h-9v5Z" fill="#3b92d9" /></Ico>
      </Task>
      <Task><Chrome /></Task>
      <Task><div className="flex h-[30px] w-[30px] items-center justify-center bg-black"><Ico s={20} vb="0 0 20 20"><path d="M4.500 0v20h3.500V0ZM12 0v20h3.500V0Z" fill="#b1060f" /><path d="M4.500 0 12 20h3.500L8 0Z" fill="#e50914" /></Ico></div></Task>
      <Task><div className="flex h-[30px] w-[30px] items-center justify-center rounded-[3px] bg-[#0b0b0b]">
        <Ico s={26} vb="0 0 30 30">
          <path d="M8 8c3-4 8-1 16-6-1 5-6 7-10 6-3-.5-4-.5-6 0Z" fill="#e8232d" />
          <path d="M2 15c2-6 11-4 25-7-4 5-11 4-16 5-3 .7-5 2-9 2Z" fill="#e8232d" />
          <path d="M22 14c-8-2-14 2-14 7 0 4 4 6.500 8 6.500 5 0 8-3.500 8-8.500h-9l2 3h3c-1 2-2.500 2.700-4.500 2.500-2.500-.3-4-2-3.500-4.500.6-3 4-5.500 10-6Z" fill="#e8232d" />
        </Ico>
      </div></Task>
      <Task>
        <Ico s={30} vb="0 0 30 30">
          <path d="M17 0c2 3 3 4 6 6 4 3 6 7 6 11 0 7-6 12-14 12S1 24 1 17c0-6 3-9 5-12l2 4c3-4 7-4 9-9Z" fill="#ff9a1e" />
          <path d="M1 17c0 7 6 12 14 12s13-4 14-11c-4 6-9 7-14 6S7 18 7 12l-3-3C2 11 1 14 1 17Z" fill="#ff3d5a" />
          <path d="M17 0c2 3 3 4 6 6 3 2 5 5 5 8l-6 2-6-8Z" fill="#ffd83a" />
          <circle cx="15.500" cy="15.500" r="6.300" fill="#7a3be0" />
          <path d="M6 10c4-2 6 0 9 1-1 2-4 2-5 4 2 2 5 1 7-1-1 5-7 6-10 2Z" fill="#ff8a1c" />
        </Ico>
      </Task>
      <Task>
        <div className="relative h-[30px] w-[30px] rounded-[3px] bg-[#107c10]">
          <Ico s={30} vb="0 0 30 30"><circle cx="15" cy="15" r="12.500" fill="#fff" /><path d="M6 5.500C9 4 12 6 15 9c3-3 6-5 9-3.500M6 25c1-6 5-11 9-14 4 3 8 8 9 14M11 10C7 14 4 19 5 24M19 10c4 4 7 9 6 14" stroke="#107c10" strokeWidth="2.200" /></Ico>
          <Badge className="left-[20px] top-[14px]" />
        </div>
      </Task>
      <Task><div className="flex h-[30px] w-[30px] items-center justify-center bg-[linear-gradient(50deg,#1a48ff_10%,#7a3ab0_50%,#ff2525_85%)]"><Ico s={22} vb="0 0 22 22"><path d="M4 19V13C1 9 4 2 11 2c5 0 8 4 8 7l1.500 3.500L19 13v4h-4.500" stroke="#fff" strokeWidth="1.500" /><path d="M7.500 17v-3c-2-4 0-8 3.500-8s5 3 4 6l-1.500 2v3Z" stroke="#fff" strokeWidth="1.500" /><path d="M10 14v-3a1.500 1.500 0 0 1 3 0v3Z" stroke="#fff" /></Ico></div></Task>
      <Task on={blue}>
        <Ico s={30} vb="0 0 30 30"><path d="M15 0C12 3 11.500 4.500 11 6c9-2.500 15.500 3 15 9.500C25.500 22 20 24 15.500 30c-.5-2.500 0-4 .5-5C9 26 4 22 4 15.500 4 9 8 5 15 0Z" fill="#ee642f" /><circle cx="15" cy="15.500" r="4.600" fill="#e3ddca" /></Ico>
      </Task>
      <Task bg="bg-[#fab276]" on="w-full bg-[#ff7300]">
        <div className="flex h-[30px] w-[30px] items-center justify-center rounded-[5px] bg-[#00b900]">
          <svg width="24" height="24" viewBox="0 0 24 24"><path d="M12 1.500c6.500 0 11 4 11 9 0 5.500-6.500 9.500-11 12.500l-.5-3.500C5 19.500 1 15.500 1 10.500c0-5 4.500-9 11-9Z" fill="#fff" /><text x="12" y="13" fontSize="6.500" fontWeight="700" textAnchor="middle" fill="#00b900" fontFamily="Liberation Sans, sans-serif">LINE</text></svg>
        </div>
      </Task>
      <Task on={blue}><Chrome tag /></Task>
      <Task on={blue}>
        <Ico s={30} vb="0 0 30 30"><circle cx="15" cy="15" r="14" fill="#fff" stroke="#d9242b" strokeWidth="1.300" /><circle cx="17.500" cy="8" r="2" fill="#d9242b" /><path d="M2.500 5 9 10l6 1.500 4-1 7.500-4.500M18 10l-3 5.500-11 2" stroke="#d9242b" strokeWidth="1.500" /><path d="m16 10 3 1-2 7-2 10.500-.5-11Z" fill="#d9242b" /></Ico>
      </Task>
      <Task bg="bg-[#f4f1ea]" on="w-full bg-[#0078d7]">
        <div className="relative h-[30px] w-[30px]">
          <div className="absolute bottom-0 left-0 h-[26px] w-[26px] bg-[#009a9a]" />
          <div className="absolute right-0 top-0 flex h-[26px] w-[26px] items-end justify-center bg-[#8e160e] pb-[2px] pr-[4px] font-['Liberation_Sans'] text-[13px] font-bold leading-[15px] tracking-[-0.500px] text-white">NX</div>
        </div>
      </Task>

      <div className="ml-auto flex h-[50px] items-center">
        <Ico s={16} vb="0 0 16 16" className="mr-[14px]"><path d="m.5 12 7.500-7.500L15.500 12" stroke="#111" strokeWidth="1.400" /></Ico>
        <Ico s={16} vb="0 0 16 18" className="mr-[9px] h-[18px]"><path d="M1.500 5.500h9v7h-9ZM10.500 8l4-2v6l-4-2M4 2c3-1.500 6-1.500 8 0M3 16c3 1.500 5 1.500 8 0" stroke="#111" strokeWidth="1.200" /></Ico>
        <Ico s={22} vb="0 0 22 20" className="mr-[8px]"><path d="M14 17H1V3l19-2v10" stroke="#111" strokeWidth="1.200" /><path d="M6 9c1-4 7-4 8 0M14 6v3h-3M14 11c-1 3-6 3-7 1M6 15v-3h3" stroke="#111" strokeWidth="1.200" /><circle cx="16" cy="15.500" r="4.500" fill="#ff9600" /></Ico>
        <Ico s={20} vb="0 0 20 18" className="mr-[10px]"><path d="M3 12C-1 9 3 5 5 5c2-5 9-5 10 0 4 0 5 6 1 7Z" fill="#8c8c8c" stroke="#333" /><path d="M4 12c0-4 5-6 8-2l3 2Z" fill="#ddd" /><circle cx="15" cy="12.500" r="5" fill="#dd1f33" /><path d="m13 10.500 4 4M17 10.500l-4 4" stroke="#fff" strokeWidth="1.400" /></Ico>
        <Ico s={20} vb="0 0 20 14" className="mr-[10px]"><path d="M6 3.500h12v9H5v-3" stroke="#111" strokeWidth="1.200" /><path d="M8 5.500h8v5H8ZM18.500 6h1.500v4h-1.500Z" fill="#111" /><path d="M1 2.500h5v3c0 2-5 2-5 0ZM2.300 0v2.500M4.700 0v2.500M3.500 7v3H6" stroke="#111" strokeWidth="1.100" /></Ico>
        <Ico s={19} vb="0 0 19 16" className="mr-[14px]"><path d="M1 5.500h2.500l4-4v13l-4-4H1ZM11.500 5l6 6M17.500 5l-6 6" stroke="#111" strokeWidth="1.200" /></Ico>
        <Ico s={16} vb="0 0 16 16" className="mr-[11px]"><path d="M.8 15C1 7 7 1 15 .8M4.500 15C5 9 9 5 15 4.500M8.500 15c0-4 3-6.500 6.500-6.500" stroke="#222" strokeWidth="1.200" /><circle cx="13.500" cy="13.500" r="1.800" fill="#111" /></Ico>
        <div className="mr-[13px] w-[18px] pb-px font-['Noto_Sans_CJK_TC',sans-serif] text-[18px] font-medium leading-[24px] text-black">中</div>
        <div className="w-[76px] text-center font-['Open_Sans','Noto_Sans_CJK_TC',sans-serif] text-[15px] leading-[23px] tracking-[0.100px] text-[#151515]">
          <div className="whitespace-nowrap">上午 09:01</div>
          <div className="whitespace-nowrap">2023/4/17</div>
        </div>
        <div className="relative ml-[25px] h-[20px] w-[45px]">
          <Ico s={20} vb="0 0 20 20"><path d="M0 1h20v15H9l-4 4v-4H0Z" fill="#000" /><path d="M3.500 5h13M3.500 8.500h13M3.500 12h9" stroke="#fff" strokeWidth="1.300" /></Ico>
          <Badge className="left-[9px] top-[9px]" />
        </div>
        <div className="h-[50px] w-px bg-[#b3ada4]" />
        <div className="w-[5px]" />
      </div>
    </div>
  );
}

export default function App() {
  return (
    <div className="flex h-[1080px] w-[1920px] flex-col overflow-hidden bg-white font-['Open_Sans','Noto_Sans',sans-serif]">
      <Defs />
      <div className="h-[60px] bg-[linear-gradient(90deg,#006489_0%,#016c93_40%,#04769f_85%,#057aa5_100%)]">
        <QuickBar />
        <MenuBar />
      </div>
      <Ribbon />
      <div className="flex h-[849px] border-b border-[#a9a9a9]">
        <SideTabs />
        <Navigator />
        <Viewer />
      </div>
      <div className="h-[21px] bg-white pl-[3px] text-[15px] leading-[19px] tracking-[-0.080px] text-[#222]">Select objects and use MB3, or double-click an object</div>
      <Taskbar />
    </div>
  );
}
